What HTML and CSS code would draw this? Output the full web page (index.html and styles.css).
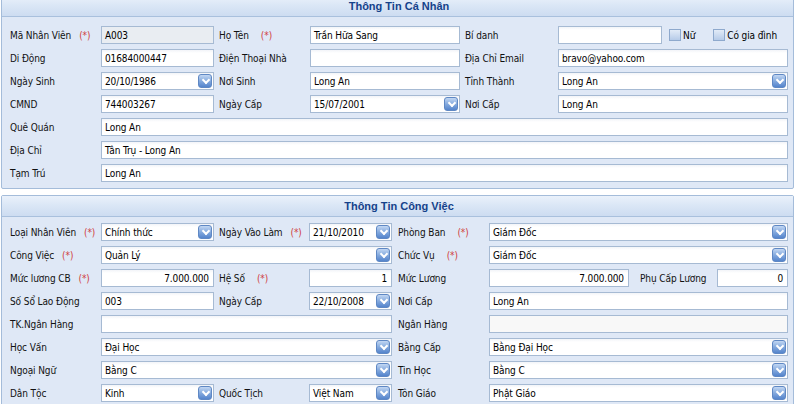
FILE: index.html
```html
<!DOCTYPE html>
<html lang="vi">
<head>
<meta charset="utf-8">
<title>Thông Tin Nhân Viên</title>
<link rel="stylesheet" href="styles.css">
</head>
<body>
<div class="page">
  <section class="panel p1">
    <div class="panel-head">Thông Tin Cá Nhân</div>
    <div class="form f1">
      <div class="lbl">Mã Nhân Viên<span class="req">(*)</span></div>
      <div class="fld dis"><span class="val">A003</span></div>
      <div class="lbl pad">Họ Tên<span class="req wide">(*)</span></div>
      <div class="fld"><span class="val">Trần Hữa Sang</span></div>
      <div class="lbl pad">Bí danh</div>
      <div class="fld-group">
        <div class="fld alias"></div>
        <label class="chk"><span class="box"></span>Nữ</label>
        <label class="chk gia"><span class="box"></span>Có gia đình</label>
      </div>

      <div class="lbl">Di Động</div>
      <div class="fld"><span class="val">01684000447</span></div>
      <div class="lbl pad">Điện Thoại Nhà</div>
      <div class="fld"></div>
      <div class="lbl pad">Địa Chỉ Email</div>
      <div class="fld"><span class="val">bravo@yahoo.com</span></div>

      <div class="lbl">Ngày Sinh</div>
      <div class="fld combo"><span class="val">20/10/1986</span><span class="trig"></span></div>
      <div class="lbl pad">Nơi Sinh</div>
      <div class="fld"><span class="val">Long An</span></div>
      <div class="lbl pad">Tỉnh Thành</div>
      <div class="fld combo"><span class="val">Long An</span><span class="trig"></span></div>

      <div class="lbl">CMND</div>
      <div class="fld"><span class="val">744003267</span></div>
      <div class="lbl pad">Ngày Cấp</div>
      <div class="fld combo"><span class="val">15/07/2001</span><span class="trig"></span></div>
      <div class="lbl pad">Nơi Cấp</div>
      <div class="fld"><span class="val">Long An</span></div>

      <div class="lbl">Quê Quán</div>
      <div class="fld span5"><span class="val">Long An</span></div>
      <div class="lbl">Địa Chỉ</div>
      <div class="fld span5"><span class="val">Tân Trụ - Long An</span></div>
      <div class="lbl">Tạm Trú</div>
      <div class="fld span5"><span class="val">Long An</span></div>
    </div>
  </section>

  <section class="panel p2">
    <div class="panel-head">Thông Tin Công Việc</div>
    <div class="form f2">
      <div class="lbl">Loại Nhân Viên<span class="req">(*)</span></div>
      <div class="fld combo"><span class="val">Chính thức</span><span class="trig"></span></div>
      <div class="lbl pad">Ngày Vào Làm<span class="req">(*)</span></div>
      <div class="fld combo"><span class="val">21/10/2010</span><span class="trig"></span></div>
      <div class="lbl pad6">Phòng Ban<span class="req wide">(*)</span></div>
      <div class="fld combo span3"><span class="val">Giám Đốc</span><span class="trig"></span></div>

      <div class="lbl">Công Việc<span class="req">(*)</span></div>
      <div class="fld combo span3"><span class="val">Quản Lý</span><span class="trig"></span></div>
      <div class="lbl pad6">Chức Vụ<span class="req wide">(*)</span></div>
      <div class="fld combo span3"><span class="val">Giám Đốc</span><span class="trig"></span></div>

      <div class="lbl">Mức lương CB<span class="req">(*)</span></div>
      <div class="fld num"><span class="val">7.000.000</span></div>
      <div class="lbl pad">Hệ Số<span class="req wide">(*)</span></div>
      <div class="fld num"><span class="val">1</span></div>
      <div class="lbl pad6">Mức Lương</div>
      <div class="fld num"><span class="val">7.000.000</span></div>
      <div class="lbl pad11">Phụ Cấp Lương</div>
      <div class="fld num"><span class="val">0</span></div>

      <div class="lbl">Số Sổ Lao Động</div>
      <div class="fld"><span class="val">003</span></div>
      <div class="lbl pad">Ngày Cấp</div>
      <div class="fld combo"><span class="val">22/10/2008</span><span class="trig"></span></div>
      <div class="lbl pad6">Nơi Cấp</div>
      <div class="fld span3"><span class="val">Long An</span></div>

      <div class="lbl">TK.Ngân Hàng</div>
      <div class="fld span3"></div>
      <div class="lbl pad6">Ngân Hàng</div>
      <div class="fld span3 soft"></div>

      <div class="lbl">Học Vấn</div>
      <div class="fld combo span3"><span class="val">Đại Học</span><span class="trig"></span></div>
      <div class="lbl pad6">Bằng Cấp</div>
      <div class="fld combo span3"><span class="val">Bằng Đại Học</span><span class="trig"></span></div>

      <div class="lbl">Ngoại Ngữ</div>
      <div class="fld combo span3"><span class="val">Bằng C</span><span class="trig"></span></div>
      <div class="lbl pad6">Tin Học</div>
      <div class="fld combo span3"><span class="val">Bằng C</span><span class="trig"></span></div>

      <div class="lbl">Dân Tộc</div>
      <div class="fld combo"><span class="val">Kinh</span><span class="trig"></span></div>
      <div class="lbl pad">Quốc Tịch</div>
      <div class="fld combo"><span class="val">Việt Nam</span><span class="trig"></span></div>
      <div class="lbl pad6">Tôn Giáo</div>
      <div class="fld combo span3"><span class="val">Phật Giáo</span><span class="trig"></span></div>
    </div>
  </section>
</div>
</body>
</html>
```

FILE: styles.css
```css
* { box-sizing: border-box; }
html, body {
  margin: 0;
  padding: 0;
  background: #ffffff;
  overflow: hidden;
}
body {
  font-family: "DejaVu Sans Condensed", "DejaVu Sans", sans-serif;
  font-size: 10px;
  letter-spacing: -0.1px;
  color: #000000;
}
.page {
  width: 795px;
  height: 409px;
  margin-top: -5px;
  display: flex;
  flex-direction: column;
  gap: 6px;
}
.panel {
  margin: 0 1px 0 1px;
  border: 1px solid #a4bcda;
  border-radius: 2px;
  background: #dfe8f6;
}
.panel-head {
  height: 21px;
  line-height: 21px;
  text-align: center;
  font-family: "Liberation Sans", Arial, sans-serif;
  font-size: 11px;
  letter-spacing: 0;
  font-weight: bold;
  color: #15428b;
  background: linear-gradient(#eaf1fb 0%, #dbe7f6 45%, #cddcf1 100%);
  border-bottom: 1px solid #a9c0dd;
  padding-left: 3px;
}
.form {
  display: grid;
  row-gap: 5px;
  grid-auto-rows: 18px;
  padding-left: 8px;
}
.f1 {
  grid-template-columns: 91px 113px 96px 150px 98px 230px;
  padding-top: 9px;
  padding-bottom: 6px;
}
.f2 {
  grid-template-columns: 91px 113px 95px 83px 97px 140px 88px 71px;
  padding-top: 6px;
  padding-bottom: 5px;
}
.lbl {
  display: flex;
  align-items: center;
  white-space: nowrap;
  padding-top: 1px;
  color: #111111;
}
.lbl.pad { padding-left: 5px; }
.lbl.pad6 { padding-left: 6px; }
.lbl.pad11 { padding-left: 11px; }
.req {
  color: #d0413e;
  margin-left: 8px;
}
.req.wide { margin-left: 12px; }
.fld {
  position: relative;
  display: flex;
  align-items: center;
  height: 18px;
  border: 1px solid #a6bad3;
  background: linear-gradient(#f2f4f8 0, #ffffff 3px);
  padding: 0 3px;
  white-space: nowrap;
  overflow: hidden;
}
.fld.dis { background: #e9edf2; }
.fld.soft { background: #f8f8f8; }
.fld.num { justify-content: flex-end; padding-right: 4px; }
.span5 { grid-column: span 5; }
.span3 { grid-column: span 3; }
.fld-group {
  display: flex;
  align-items: center;
}
.fld.alias { width: 104px; flex: none; }
.chk {
  display: flex;
  align-items: center;
  margin-left: 7px;
}
.chk.gia { margin-left: 18px; }
.box {
  width: 12px;
  height: 12px;
  margin-right: 2px;
  border: 1px solid #8ea9cd;
  background: linear-gradient(#e2ebf7, #b6cbe8);
}
.trig {
  position: absolute;
  right: 1px;
  top: 1px;
  width: 14px;
  height: 14px;
  border-radius: 3px;
  border: 1px solid #5f88c4;
  background: linear-gradient(#c2d7f3 0%, #8aaee0 45%, #5484cc 100%);
}
.trig::after {
  content: "";
  position: absolute;
  left: 3.5px;
  top: 2px;
  width: 4px;
  height: 4px;
  border-right: 2px solid #ffffff;
  border-bottom: 2px solid #ffffff;
  transform: rotate(45deg);
}
```
